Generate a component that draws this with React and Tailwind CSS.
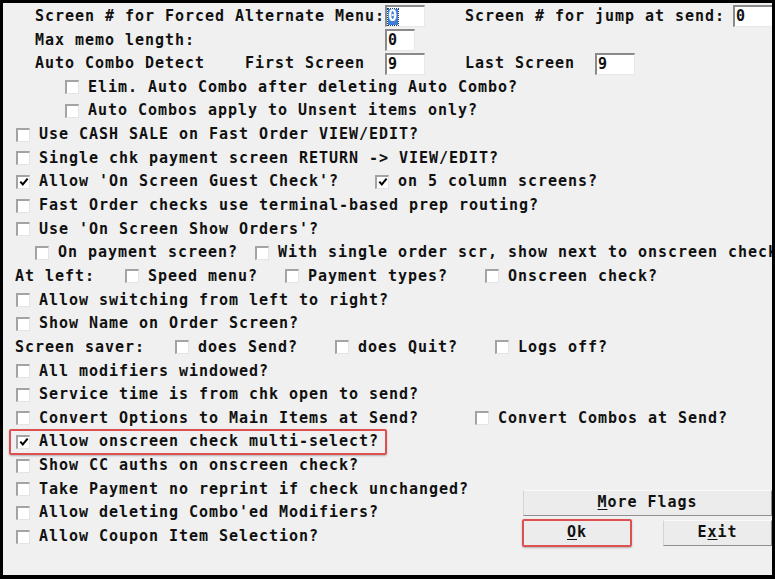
import React from "react";

const F =
  "font-['DejaVu_Sans_Mono',monospace] font-bold text-[15px] tracking-[0.97px] text-[#111]";

function Row({ children, className = "" }) {
  return (
    <div className={"h-[23.65px] flex items-center whitespace-nowrap shrink-0 " + className}>
      {children}
    </div>
  );
}

function T({ children, className = "" }) {
  return <span className={"shrink-0 leading-none " + className}>{children}</span>;
}

function Check() {
  return (
    <svg width="10" height="10" viewBox="0 0 10 10" className="block">
      <path d="M1.3 4.6 L3.8 7.5 L8.6 1.6" fill="none" stroke="#000" strokeWidth="2" />
    </svg>
  );
}

function Cb({ checked = false, className = "" }) {
  return (
    <span
      className={
        "shrink-0 box-border w-[14px] h-[14px] bg-white border-t-2 border-l-2 border-t-[#a3a3a3] border-l-[#a3a3a3] border-b border-r border-b-[#e4e4e4] border-r-[#e4e4e4] flex items-center justify-center " +
        className
      }
    >
      {checked && <Check />}
    </span>
  );
}

function Inp({ className = "", children }) {
  return (
    <span
      className={
        "shrink-0 box-border h-[22px] bg-white border-t-2 border-l-2 border-t-[#8a8a8a] border-l-[#8a8a8a] border-b border-r border-b-[#e8e8e8] border-r-[#e8e8e8] pl-[1px] flex items-center leading-none " +
        className
      }
    >
      {children}
    </span>
  );
}

function Btn({ className = "", children }) {
  return (
    <div
      className={
        "box-border h-[26px] flex items-center justify-center bg-[#ececec] border border-t-[#fafafa] border-l-[#d4d4d4] border-b-[#8f8f8f] border-r-[#8f8f8f] leading-none " +
        className
      }
    >
      {children}
    </div>
  );
}

export default function App() {
  return (
    <div
      className={
        "w-[775px] h-[579px] box-border bg-[#f0f0f0] border-t-[3px] border-l-[3px] border-r-[3px] border-b-4 border-black overflow-hidden " +
        F
      }
    >
      <div className="flex flex-col pt-[1.6px]">
        <Row>
          <T className="ml-[32px]">Screen # for Forced Alternate Menu:</T>
          <Inp className="w-[40px]">
            <span className="w-[10px] h-[16px] bg-[#3c7fd8] text-white flex items-center justify-center outline-1 outline-dotted outline-[#1a3f7a]">
              0
            </span>
          </Inp>
          <T className="ml-[40px]">Screen # for jump at send:</T>
          <Inp className="ml-[8px] w-[50px]">0</Inp>
        </Row>
        <Row>
          <T className="ml-[32px]">Max memo length:</T>
          <Inp className="ml-[190px] w-[30px]">0</Inp>
        </Row>
        <Row>
          <T className="ml-[32px]">Auto Combo Detect</T>
          <T className="ml-[40px]">First Screen</T>
          <Inp className="ml-[20px] w-[40px]">9</Inp>
          <T className="ml-[40px]">Last Screen</T>
          <Inp className="ml-[20px] w-[40px]">9</Inp>
        </Row>
        <Row>
          <Cb className="ml-[62px]" />
          <T className="ml-[9px]">Elim. Auto Combo after deleting Auto Combo?</T>
        </Row>
        <Row>
          <Cb className="ml-[62px]" />
          <T className="ml-[9px]">Auto Combos apply to Unsent items only?</T>
        </Row>
        <Row>
          <Cb className="ml-[13px]" />
          <T className="ml-[9px]">Use CASH SALE on Fast Order VIEW/EDIT?</T>
        </Row>
        <Row>
          <Cb className="ml-[13px]" />
          <T className="ml-[9px]">Single chk payment screen RETURN -&gt; VIEW/EDIT?</T>
        </Row>
        <Row>
          <Cb checked className="ml-[13px]" />
          <T className="ml-[9px]">Allow 'On Screen Guest Check'?</T>
          <Cb checked className="ml-[36px]" />
          <T className="ml-[9px]">on 5 column screens?</T>
        </Row>
        <Row>
          <Cb className="ml-[13px]" />
          <T className="ml-[9px]">Fast Order checks use terminal-based prep routing?</T>
        </Row>
        <Row>
          <Cb className="ml-[13px]" />
          <T className="ml-[9px]">Use 'On Screen Show Orders'?</T>
        </Row>
        <Row>
          <Cb className="ml-[32px]" />
          <T className="ml-[9px]">On payment screen?</T>
          <Cb className="ml-[17px]" />
          <T className="ml-[9px]">With single order scr, show next to onscreen check</T>
        </Row>
        <Row>
          <T className="ml-[12px]">At left:</T>
          <Cb className="ml-[30px]" />
          <T className="ml-[9px]">Speed menu?</T>
          <Cb className="ml-[27px]" />
          <T className="ml-[9px]">Payment types?</T>
          <Cb className="ml-[37px]" />
          <T className="ml-[9px]">Onscreen check?</T>
        </Row>
        <Row>
          <Cb className="ml-[13px]" />
          <T className="ml-[9px]">Allow switching from left to right?</T>
        </Row>
        <Row>
          <Cb className="ml-[13px]" />
          <T className="ml-[9px]">Show Name on Order Screen?</T>
        </Row>
        <Row>
          <T className="ml-[12px]">Screen saver:</T>
          <Cb className="ml-[30px]" />
          <T className="ml-[9px]">does Send?</T>
          <Cb className="ml-[37px]" />
          <T className="ml-[9px]">does Quit?</T>
          <Cb className="ml-[37px]" />
          <T className="ml-[9px]">Logs off?</T>
        </Row>
        <Row>
          <Cb className="ml-[13px]" />
          <T className="ml-[9px]">All modifiers windowed?</T>
        </Row>
        <Row>
          <Cb className="ml-[13px]" />
          <T className="ml-[9px]">Service time is from chk open to send?</T>
        </Row>
        <Row>
          <Cb className="ml-[13px]" />
          <T className="ml-[9px]">Convert Options to Main Items at Send?</T>
          <Cb className="ml-[56px]" />
          <T className="ml-[9px]">Convert Combos at Send?</T>
        </Row>
        <Row className="relative">
          <div className="absolute left-[6px] top-[-1px] bottom-[-1px] w-[378px] border-2 border-[#dc5050] rounded-[2px] shadow-[0_1px_2px_rgba(0,0,0,0.25)]" />
          <Cb checked className="ml-[13px]" />
          <T className="ml-[9px]">Allow onscreen check multi-select?</T>
        </Row>
        <div className="flex">
          <div className="flex flex-col">
            <Row>
              <Cb className="ml-[13px]" />
              <T className="ml-[9px]">Show CC auths on onscreen check?</T>
            </Row>
            <Row>
              <Cb className="ml-[13px]" />
              <T className="ml-[9px]">Take Payment no reprint if check unchanged?</T>
            </Row>
            <Row>
              <Cb className="ml-[13px]" />
              <T className="ml-[9px]">Allow deleting Combo'ed Modifiers?</T>
            </Row>
            <Row>
              <Cb className="ml-[13px]" />
              <T className="ml-[9px]">Allow Coupon Item Selection?</T>
            </Row>
          </div>
          <div className="ml-auto w-[249px] mt-[36px] flex flex-col gap-[4px]">
            <Btn className="w-full">
              <span>
                <span className="underline underline-offset-2">M</span>ore Flags
              </span>
            </Btn>
            <div className="flex">
              <div className="relative w-[108px]">
                <Btn className="w-full">
                  <span>
                    <span className="underline underline-offset-2">O</span>k
                  </span>
                </Btn>
                <div className="absolute inset-[-1px] border-2 border-[#dc5050] rounded-[2px] shadow-[0_1px_2px_rgba(0,0,0,0.25)]" />
              </div>
              <Btn className="ml-auto w-[109px]">
                <span>
                  E<span className="underline underline-offset-2">x</span>it
                </span>
              </Btn>
            </div>
          </div>
        </div>
      </div>
    </div>
  );
}
